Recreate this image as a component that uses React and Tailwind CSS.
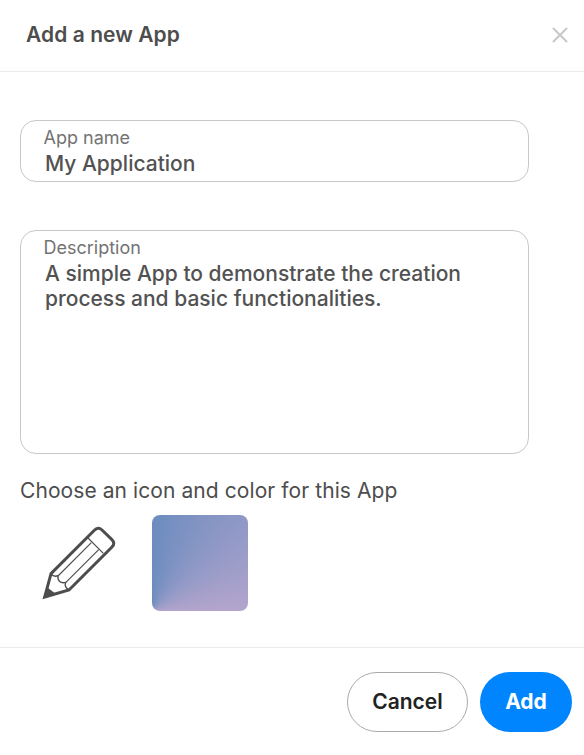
// App.jsx
import { useState } from "react";

const PencilIcon = () => (
  <svg
    viewBox="6 15 288 288"
    className="w-24 h-24 text-[#4d4d4d]"
    fill="none"
    stroke="currentColor"
    strokeLinejoin="round"
  >
    <path
      d="M63 191 L193 61 Q204 49 216 60 L245 88 Q257 100 246 111 L117 240 L44 261 Z"
      strokeWidth="9"
      strokeLinejoin="miter"
    />
    <path d="M174 84 L220 130" strokeWidth="3.5" />
    <path d="M184 98 L84 198 M206 119 L107 218" strokeWidth="3.5" />
    <path
      d="M63 192 Q72 202 84 197 C82 212 92 222 107 217 C103 227 108 236 118 240"
      strokeWidth="4"
    />
    <path d="M51 232 L74 249 L39 266 Z" fill="currentColor" stroke="none" />
  </svg>
);

const CloseIcon = () => (
  <svg
    viewBox="0 0 16 16"
    className="w-4 h-4 text-[#c8c8c8]"
    fill="none"
    stroke="currentColor"
    strokeWidth="2"
  >
    <path d="M1 1 L15 15 M15 1 L1 15" />
  </svg>
);

const App = () => {
  const [name, setName] = useState("My Application");
  const [description, setDescription] = useState(
    "A simple App to demonstrate the creation process and basic functionalities."
  );

  return (
    <div className="flex flex-col h-[755px] bg-white text-[#4d4d4d] font-['Inter',sans-serif]">
      <header className="flex items-center justify-between h-[72px] pl-[26px] pr-4 border-b border-[#ebebeb]">
        <h1 className="text-[21px] leading-7 font-semibold tracking-[0.06px] pb-px">
          Add a new App
        </h1>
        <button aria-label="Close" className="pb-px">
          <CloseIcon />
        </button>
      </header>

      <main className="flex-1 pl-5 pr-[55px] pt-12">
        <label className="block h-[62px] px-6 pt-1.5 border border-[#c8c8c8] rounded-2xl">
          <span className="block -ml-[1.5px] text-lg leading-[22px] text-[#737373]">
            App name
          </span>
          <input
            className="block w-full text-[21px] leading-[25px] h-[29px] font-medium text-[#525252] outline-none"
            value={name}
            onChange={(e) => setName(e.target.value)}
          />
        </label>

        <label className="block h-[224px] mt-12 px-6 pt-1.5 border border-[#c8c8c8] rounded-2xl">
          <span className="block -ml-[1.5px] text-lg leading-[22px] text-[#737373]">
            Description
          </span>
          <textarea
            className="block w-full h-[180px] mt-0.5 text-[21px] leading-[25px] font-medium text-[#525252] outline-none resize-none"
            value={description}
            onChange={(e) => setDescription(e.target.value)}
          />
        </label>

        <p className="mt-6 text-[21px] leading-[25px] tracking-[0.08px]">
          Choose an icon and color for this App
        </p>
        <div className="flex gap-6 mt-3 pl-3">
          <button aria-label="Choose icon">
            <PencilIcon />
          </button>
          <button
            aria-label="Choose color"
            className="w-24 h-24 rounded-lg bg-[conic-gradient(from_0deg_at_0%_100%,#6b8cbf_0deg,#b4a5cd_90deg)]"
          />
        </div>
      </main>

      <footer className="flex justify-end gap-3 h-[108px] pt-6 pr-3 border-t border-[#ebebeb] text-[21px] font-semibold">
        <button className="w-[121px] h-[60px] rounded-full border border-[#aaaaaa] text-[#222222]">
          Cancel
        </button>
        <button className="w-[92px] h-[60px] rounded-full bg-[#0085ff] text-white font-bold">
          Add
        </button>
      </footer>
    </div>
  );
};

export default App;
